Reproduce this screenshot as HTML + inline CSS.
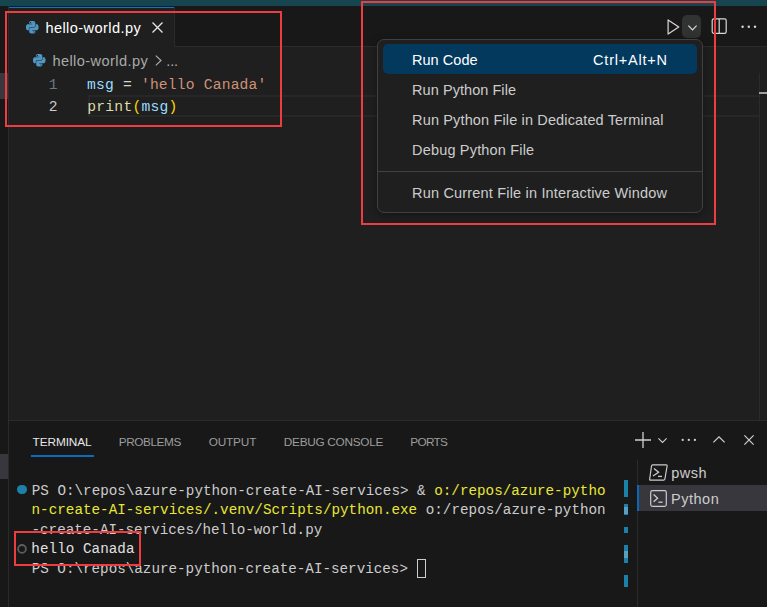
<!DOCTYPE html>
<html>
<head>
<meta charset="utf-8">
<title>hello-world.py</title>
<style>
html,body{margin:0;padding:0;}
body{width:767px;height:607px;overflow:hidden;background:#1f1f1f;position:relative;font-family:"Liberation Sans",sans-serif;color:#cccccc;}
.abs{position:absolute;}
.t{position:absolute;white-space:pre;line-height:20px;height:20px;}
.ui{font-family:"Liberation Sans",sans-serif;font-size:14.5px;}
.mono{font-family:"Liberation Mono",monospace;}
.code{font-family:"Liberation Mono",monospace;font-size:14.67px;}
.term{font-family:"Liberation Mono",monospace;font-size:14.25px;color:#cccccc;}
.y{color:#e8e636;}
svg{position:absolute;overflow:visible;}
.redbox{position:absolute;border:2px solid #ee3d40;box-sizing:border-box;}
</style>
</head>
<body>

<!-- top teal band -->
<div class="abs" style="left:0;top:0;width:767px;height:6px;background:#16454f;"></div>

<!-- left strip -->
<div class="abs" style="left:0;top:6px;width:8px;height:601px;background:#181818;"></div>
<div class="abs" style="left:8px;top:6px;width:1px;height:601px;background:#2b2b2b;"></div>
<div class="abs" style="left:0;top:73px;width:8px;height:25.6px;background:#37373d;"></div>
<div class="abs" style="left:0;top:454.4px;width:8px;height:25px;background:#37373d;"></div>

<!-- tab bar -->
<div class="abs" style="left:9px;top:6px;width:758px;height:40px;background:#181818;"></div>
<div class="abs" style="left:9px;top:46px;width:758px;height:1px;background:#2b2b2b;"></div>
<!-- active tab -->
<div class="abs" style="left:9px;top:7px;width:165px;height:40px;background:#1f1f1f;"></div>
<div class="abs" style="left:9px;top:7px;width:165px;height:1px;background:#0078d4;"></div>
<div class="abs" style="left:174px;top:7px;width:1px;height:39px;background:#2b2b2b;"></div>

<!-- python icon tab -->
<svg style="left:25.5px;top:21px;" width="12.5" height="12.5" viewBox="0 0 24 24"><path fill="#4f97c2" d="M14.25.18l.9.2.73.26.59.3.45.32.34.34.25.34.16.33.1.3.04.26.02.2-.01.13V8.5l-.05.63-.13.55-.21.46-.26.38-.3.31-.33.25-.35.19-.35.14-.33.1-.3.07-.26.04-.21.02H8.77l-.69.05-.59.14-.5.22-.41.27-.33.32-.27.35-.2.36-.15.37-.1.35-.07.32-.04.27-.02.21v3.06H3.17l-.21-.03-.28-.07-.32-.12-.35-.18-.36-.26-.36-.36-.35-.46-.32-.59-.28-.73-.21-.88-.14-1.05-.05-1.23.06-1.22.16-1.04.24-.87.32-.71.36-.57.4-.44.42-.33.42-.24.4-.16.36-.1.32-.05.24-.01h.16l.06.01h8.16v-.83H6.18l-.01-2.75-.02-.37.05-.34.11-.31.17-.28.25-.26.31-.23.38-.2.44-.18.51-.15.58-.12.64-.1.71-.06.77-.04.84-.02 1.27.05zm-6.3 1.98l-.23.33-.08.41.08.41.23.34.33.22.41.09.41-.09.33-.22.23-.34.08-.41-.08-.41-.23-.33-.33-.22-.41-.09-.41.09zm13.09 3.95l.28.06.32.12.35.18.36.27.36.35.35.47.32.59.28.73.21.88.14 1.04.05 1.23-.06 1.23-.16 1.04-.24.86-.32.71-.36.57-.4.45-.42.33-.42.24-.4.16-.36.09-.32.05-.24.02-.16-.01h-8.22v.82h5.84l.01 2.76.02.36-.05.34-.11.31-.17.29-.25.25-.31.24-.38.2-.44.17-.51.15-.58.13-.64.09-.71.07-.77.04-.84.01-1.27-.04-1.07-.14-.9-.2-.73-.25-.59-.3-.45-.33-.34-.34-.25-.34-.16-.33-.1-.3-.04-.25-.02-.2.01-.13v-5.34l.05-.64.13-.54.21-.46.26-.38.3-.32.33-.24.35-.2.35-.14.33-.1.3-.06.26-.04.21-.02.13-.01h5.84l.69-.05.59-.14.5-.21.41-.28.33-.32.27-.35.2-.36.15-.36.1-.35.07-.32.04-.28.02-.21V6.07h2.09l.14.01zm-6.47 14.25l-.23.33-.08.41.08.41.23.33.33.23.41.08.41-.08.33-.23.23-.33.08-.41-.08-.41-.23-.33-.33-.23-.41-.08-.41.08z"/></svg>
<div class="t ui" id="tabtxt" style="left:45.41px;top:18.00px;color:#ffffff;font-size:14.6px;letter-spacing:0.408px;">hello-world.py</div>
<!-- close x -->
<svg style="left:152px;top:21.5px;" width="11" height="11" viewBox="0 0 11 11"><path d="M0.5 0.5L10.5 10.5M10.5 0.5L0.5 10.5" stroke="#e8e8e8" stroke-width="1.3" fill="none"/></svg>

<!-- breadcrumb -->
<svg style="left:32.5px;top:53.5px;" width="12.5" height="12.5" viewBox="0 0 24 24"><path fill="#4f97c2" d="M14.25.18l.9.2.73.26.59.3.45.32.34.34.25.34.16.33.1.3.04.26.02.2-.01.13V8.5l-.05.63-.13.55-.21.46-.26.38-.3.31-.33.25-.35.19-.35.14-.33.1-.3.07-.26.04-.21.02H8.77l-.69.05-.59.14-.5.22-.41.27-.33.32-.27.35-.2.36-.15.37-.1.35-.07.32-.04.27-.02.21v3.06H3.17l-.21-.03-.28-.07-.32-.12-.35-.18-.36-.26-.36-.36-.35-.46-.32-.59-.28-.73-.21-.88-.14-1.05-.05-1.23.06-1.22.16-1.04.24-.87.32-.71.36-.57.4-.44.42-.33.42-.24.4-.16.36-.1.32-.05.24-.01h.16l.06.01h8.16v-.83H6.18l-.01-2.75-.02-.37.05-.34.11-.31.17-.28.25-.26.31-.23.38-.2.44-.18.51-.15.58-.12.64-.1.71-.06.77-.04.84-.02 1.27.05zm-6.3 1.98l-.23.33-.08.41.08.41.23.34.33.22.41.09.41-.09.33-.22.23-.34.08-.41-.08-.41-.23-.33-.33-.22-.41-.09-.41.09zm13.09 3.95l.28.06.32.12.35.18.36.27.36.35.35.47.32.59.28.73.21.88.14 1.04.05 1.23-.06 1.23-.16 1.04-.24.86-.32.71-.36.57-.4.45-.42.33-.42.24-.4.16-.36.09-.32.05-.24.02-.16-.01h-8.22v.82h5.84l.01 2.76.02.36-.05.34-.11.31-.17.29-.25.25-.31.24-.38.2-.44.17-.51.15-.58.13-.64.09-.71.07-.77.04-.84.01-1.27-.04-1.07-.14-.9-.2-.73-.25-.59-.3-.45-.33-.34-.34-.25-.34-.16-.33-.1-.3-.04-.25-.02-.2.01-.13v-5.34l.05-.64.13-.54.21-.46.26-.38.3-.32.33-.24.35-.2.35-.14.33-.1.3-.06.26-.04.21-.02.13-.01h5.84l.69-.05.59-.14.5-.21.41-.28.33-.32.27-.35.2-.36.15-.36.1-.35.07-.32.04-.28.02-.21V6.07h2.09l.14.01zm-6.47 14.25l-.23.33-.08.41.08.41.23.33.33.23.41.08.41-.08.33-.23.23-.33.08-.41-.08-.41-.23-.33-.33-.23-.41-.08-.41.08z"/></svg>
<div class="t ui" id="bctxt" style="left:52.41px;top:51.10px;color:#a9a9a9;font-size:14.6px;letter-spacing:0.406px;">hello-world.py</div>
<svg style="left:155px;top:55px;" width="7" height="11" viewBox="0 0 7 11"><path d="M0.8 0.6L6 5.5L0.8 10.4" stroke="#a9a9a9" stroke-width="1.2" fill="none"/></svg>
<div class="t ui" id="bcdots" style="left:166.31px;top:51.10px;color:#a9a9a9;font-size:14.6px;letter-spacing:-0.211px;">...</div>

<!-- current line highlight -->
<div class="abs" style="left:88px;top:95px;width:671px;height:21.6px;border:2px solid #272727;border-right:none;box-sizing:border-box;"></div>

<!-- line numbers -->
<div class="t code" id="ln1" style="left:48.87px;top:75.40px;color:#6e7681;">1</div>
<div class="t code" id="ln2" style="left:48.87px;top:96.80px;color:#cccccc;">2</div>
<!-- code -->
<div class="t code" id="code1" style="left:87.08px;top:75.40px;letter-spacing:0.177px;"><span style="color:#9cdcfe">msg</span><span style="color:#d4d4d4"> = </span><span style="color:#ce9178">'hello Canada'</span></div>
<div class="t code" id="code2" style="left:87.25px;top:96.80px;letter-spacing:0.240px;"><span style="color:#dcdcaa">print</span><span style="color:#ffd700">(</span><span style="color:#9cdcfe">msg</span><span style="color:#ffd700">)</span></div>

<!-- editor scrollbar / overview ruler -->
<div class="abs" style="left:759px;top:73px;width:1px;height:347px;background:#2b2b2b;"></div>
<div class="abs" style="left:759px;top:92px;width:8px;height:2px;background:#a0a0a0;"></div>

<!-- toolbar icons -->
<svg style="left:667px;top:19px;" width="14" height="16" viewBox="0 0 14 16"><path d="M1.1 0.9L11.8 8L1.1 15.1Z" stroke="#d8d8d8" stroke-width="1.2" fill="none" stroke-linejoin="round"/></svg>
<div class="abs" style="left:682.4px;top:14.5px;width:18.4px;height:23.8px;border-radius:5px;background:#313232;"></div>
<svg style="left:687.5px;top:24.5px;" width="9" height="6" viewBox="0 0 9 6"><path d="M0.4 0.6L4.5 4.8L8.6 0.6" stroke="#d8d8d8" stroke-width="1.2" fill="none"/></svg>
<svg style="left:711px;top:18px;" width="16" height="16" viewBox="0 0 16 16"><rect x="1.2" y="0.9" width="14" height="14.4" rx="1.6" stroke="#d8d8d8" stroke-width="1.2" fill="none"/><path d="M8.2 0.9V15.3" stroke="#d8d8d8" stroke-width="1.2"/></svg>
<svg style="left:741px;top:25px;" width="16" height="4" viewBox="0 0 16 4"><circle cx="1.6" cy="1.8" r="1.2" fill="#d8d8d8"/><circle cx="7.8" cy="1.8" r="1.2" fill="#d8d8d8"/><circle cx="14" cy="1.8" r="1.2" fill="#d8d8d8"/></svg>

<!-- dropdown menu -->
<div class="abs" id="menu" style="left:377px;top:39px;width:326px;height:174px;box-sizing:border-box;background:#1f1f1f;border:1px solid #414141;border-radius:7px;box-shadow:0 2px 8px rgba(0,0,0,0.36);"></div>
<div class="abs" style="left:383px;top:44px;width:314px;height:30px;background:#04395e;border-radius:5px;"></div>
<div class="t ui" id="m1" style="left:412.02px;top:49.60px;color:#ffffff;letter-spacing:0.036px;">Run Code</div>
<div class="t ui" id="m1k" style="left:593.12px;top:49.60px;color:#ffffff;letter-spacing:0.785px;">Ctrl+Alt+N</div>
<div class="t ui" id="m2" style="left:412.08px;top:79.60px;letter-spacing:0.052px;">Run Python File</div>
<div class="t ui" id="m3" style="left:412.08px;top:109.60px;letter-spacing:0.141px;">Run Python File in Dedicated Terminal</div>
<div class="t ui" id="m4" style="left:412.08px;top:139.60px;letter-spacing:0.173px;">Debug Python File</div>
<div class="abs" style="left:378px;top:171px;width:324px;height:1px;background:#414141;"></div>
<div class="t ui" id="m5" style="left:412.08px;top:182.80px;letter-spacing:0.180px;">Run Current File in Interactive Window</div>

<!-- panel -->
<div class="abs" style="left:9px;top:420px;width:758px;height:187px;background:#181818;"></div>
<div class="abs" style="left:9px;top:420px;width:758px;height:1px;background:#2b2b2b;"></div>
<div class="t ui" id="p1" style="left:32.54px;top:431.70px;color:#e7e7e7;font-size:11.8px;letter-spacing:-0.080px;">TERMINAL</div>
<div class="abs" style="left:31px;top:455px;width:63px;height:2px;background:#0a6cbd;"></div>
<div class="t ui" id="p2" style="left:118.74px;top:431.70px;color:#9d9d9d;font-size:11.8px;letter-spacing:-0.433px;">PROBLEMS</div>
<div class="t ui" id="p3" style="left:208.69px;top:431.70px;color:#9d9d9d;font-size:11.8px;letter-spacing:-0.162px;">OUTPUT</div>
<div class="t ui" id="p4" style="left:283.80px;top:431.70px;color:#9d9d9d;font-size:11.8px;letter-spacing:-0.279px;">DEBUG CONSOLE</div>
<div class="t ui" id="p5" style="left:410.23px;top:431.70px;color:#9d9d9d;font-size:11.8px;letter-spacing:-0.683px;">PORTS</div>

<!-- panel actions -->
<svg style="left:635px;top:431.8px;" width="16" height="16" viewBox="0 0 16 16"><path d="M8 0V16M0 8H16" stroke="#d0d0d0" stroke-width="1.3"/></svg>
<svg style="left:657.5px;top:438.2px;" width="9" height="5" viewBox="0 0 9 5"><path d="M0.4 0.4L4.5 4.4L8.6 0.4" stroke="#d0d0d0" stroke-width="1.1" fill="none"/></svg>
<svg style="left:681px;top:437.8px;" width="16" height="4" viewBox="0 0 16 4"><circle cx="1.7" cy="1.9" r="1.15" fill="#d0d0d0"/><circle cx="7.8" cy="1.9" r="1.15" fill="#d0d0d0"/><circle cx="13.9" cy="1.9" r="1.15" fill="#d0d0d0"/></svg>
<svg style="left:712.5px;top:436px;" width="12" height="7" viewBox="0 0 12 7"><path d="M0.4 6.4L6 0.8L11.6 6.4" stroke="#d0d0d0" stroke-width="1.2" fill="none"/></svg>
<svg style="left:743.8px;top:435.1px;" width="10" height="10" viewBox="0 0 10 10"><path d="M0.4 0.4L9.6 9.6M9.6 0.4L0.4 9.6" stroke="#d0d0d0" stroke-width="1.2" fill="none"/></svg>

<!-- terminal tabs list -->
<div class="abs" style="left:637px;top:460px;width:1px;height:147px;background:#2b2b2b;"></div>
<div class="abs" style="left:637px;top:485.4px;width:130px;height:25.2px;background:#37373d;"></div>
<div class="abs" style="left:637px;top:485.4px;width:2px;height:25.2px;background:#0b68b8;"></div>
<!-- pwsh icon (slanted) -->
<svg style="left:649px;top:464px;" width="19" height="17" viewBox="0 0 19 17"><path d="M3.6 0.9H17.2Q18.3 0.9 18.1 2L15.9 15Q15.7 16.1 14.6 16.1H1.4Q0.5 16.1 0.7 15L2.5 2Q2.7 0.9 3.6 0.9Z" stroke="#cccccc" stroke-width="1.2" fill="none"/><path d="M5 4.6L9.6 8.3L4 12" stroke="#cccccc" stroke-width="1.3" fill="none"/><path d="M9 12.4H13" stroke="#cccccc" stroke-width="1.3"/></svg>
<div class="t ui" id="tt1" style="left:671.27px;top:463.00px;letter-spacing:0.487px;">pwsh</div>
<!-- terminal icon -->
<svg style="left:650px;top:489.5px;" width="17" height="17" viewBox="0 0 17 17"><rect x="0.7" y="0.7" width="15.6" height="15.6" rx="1.8" stroke="#cccccc" stroke-width="1.2" fill="none"/><path d="M3.6 4.6L7.6 8.2L3.6 11.8" stroke="#cccccc" stroke-width="1.3" fill="none"/><path d="M8.4 12.2H12.6" stroke="#cccccc" stroke-width="1.3"/></svg>
<div class="t ui" id="tt2" style="left:671.08px;top:489.00px;letter-spacing:0.500px;">Python</div>

<!-- terminal overview markers -->
<div class="abs" style="left:624px;top:480px;width:4px;height:17px;background:#1b81a8;"></div>
<div class="abs" style="left:624px;top:504px;width:4px;height:11px;background:#1b81a8;"></div>
<div class="abs" style="left:624px;top:507px;width:4px;height:7px;background:#5a9fc2;"></div>
<div class="abs" style="left:624px;top:527px;width:4px;height:6px;background:#1b81a8;"></div>
<div class="abs" style="left:624px;top:545px;width:4px;height:18px;background:#1b81a8;"></div>
<div class="abs" style="left:624px;top:551px;width:4px;height:7px;background:#5a9fc2;"></div>
<div class="abs" style="left:624px;top:575px;width:4px;height:12px;background:#1b81a8;"></div>

<!-- terminal text -->
<div class="abs" style="left:17px;top:484.6px;width:9.6px;height:9.6px;border-radius:50%;background:#1b81a8;"></div>
<svg style="left:16.8px;top:544px;" width="10" height="10" viewBox="0 0 10 10"><circle cx="5" cy="4.9" r="3.9" stroke="#5e5e5e" stroke-width="1.8" fill="none"/></svg>
<div class="t term" id="r1" style="left:31.69px;top:481.10px;letter-spacing:0.013px;">PS O:\repos\azure-python-create-AI-services&gt; &amp; <span class="y">o:/repos/azure-pytho</span></div>
<div class="t term" id="r2" style="left:31.54px;top:500.10px;letter-spacing:0.018px;"><span class="y">n-create-AI-services/.venv/Scripts/python.exe</span> o:/repos/azure-python</div>
<div class="t term" id="r3" style="left:31.49px;top:520.40px;">-create-AI-services/hello-world.py</div>
<div class="t term" id="r4" style="left:31.36px;top:539.40px;color:#e0e0e0;letter-spacing:0.048px;">hello Canada</div>
<div class="t term" id="r5" style="left:31.69px;top:558.70px;">PS O:\repos\azure-python-create-AI-services&gt; </div>
<div class="abs" style="left:417px;top:559px;width:9px;height:19px;border:1px solid #cccccc;box-sizing:border-box;"></div>

<!-- red annotation boxes -->
<div class="redbox" style="left:5px;top:11px;width:277px;height:116px;"></div>
<div class="redbox" style="left:361px;top:1px;width:355px;height:224px;"></div>
<div class="redbox" style="left:14px;top:530.5px;width:127px;height:35px;"></div>

</body>
</html>
